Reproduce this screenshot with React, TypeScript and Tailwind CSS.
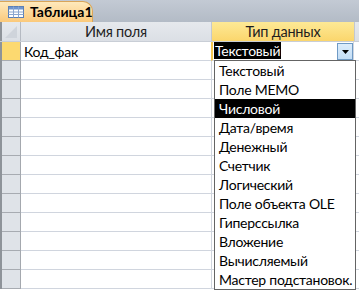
import React from "react";

const items = [
  "Текстовый",
  "Поле MEMO",
  "Числовой",
  "Дата/время",
  "Денежный",
  "Счетчик",
  "Логический",
  "Поле объекта OLE",
  "Гиперссылка",
  "Вложение",
  "Вычисляемый",
  "Мастер подстановок.",
];

function TableIcon() {
  return (
    <svg width="16" height="12" viewBox="0 0 16 12" className="shrink-0">
      <rect x="0.5" y="0.5" width="15" height="11" fill="#ffffff" stroke="#5b7fb5" />
      <rect x="1" y="1" width="14" height="2.5" fill="#6f95cf" />
      <line x1="0.5" y1="6" x2="15.5" y2="6" stroke="#8aa6d0" />
      <line x1="0.5" y1="8.5" x2="15.5" y2="8.5" stroke="#8aa6d0" />
      <line x1="5.5" y1="0.5" x2="5.5" y2="11.5" stroke="#8aa6d0" />
      <line x1="10.5" y1="0.5" x2="10.5" y2="11.5" stroke="#8aa6d0" />
    </svg>
  );
}

export default function App() {
  const rows = Array.from({ length: 13 });
  return (
    <div
      className="relative w-[359px] h-[295px] overflow-hidden bg-white text-black tracking-[-0.25px]"
      style={{ fontFamily: "Lato, 'Liberation Sans', sans-serif" }}
    >
      {/* Tab bar */}
      <div className="h-[22px] bg-gradient-to-b from-[#c3cad4] to-[#b3bbc6] flex items-end">
        <div className="h-[21px] w-[93px] rounded-tr-[10px] bg-gradient-to-b from-[#fee9bc] to-[#fbc97a] border-t border-r border-[#d9a55a] flex items-center pl-[8px] gap-[6px]">
          <TableIcon />
          <span className="text-[14px] font-bold leading-none tracking-normal">Таблица1</span>
        </div>
      </div>

      {/* Header */}
      <div className="flex h-[20px] border-b border-[#c9ced6] bg-gradient-to-b from-[#e6e9ed] to-[#dbdfe5]">
        <div className="w-[2px] bg-[#8e9399]" />
        <div className="relative w-[19px] border-r border-[#b5bac2]">
          <svg width="14" height="14" viewBox="0 0 14 14" className="absolute right-[2px] bottom-[2px]">
            <polygon points="13,1 13,13 1,13" fill="#cfd4db" />
          </svg>
        </div>
        <div className="w-[191px] border-r border-[#c3c8d0] flex items-center justify-center text-[14.5px] text-[#1e1e1e]">
          Имя поля
        </div>
        <div className="w-[143px] border-r border-[#c3c8d0] bg-gradient-to-b from-[#fde995] to-[#fbd66c] flex items-center justify-center text-[14.5px] text-[#1e1e1e]">
          Тип данных
        </div>
        <div className="flex-1" />
      </div>

      {/* Rows */}
      {rows.map((_, i) => (
        <div key={i} className="flex h-[19px]">
          <div className="w-[2px] bg-[#8e9399]" />
          <div
            className={`w-[19px] border-r border-b border-r-[#a4a8ae] border-b-[#a7abb1] ${
              i === 0 ? "bg-[#fcd970]" : "bg-[#dfe3e8]"
            }`}
          />
          <div className="w-[191px] border-r border-b border-[#d0d5de] flex items-center pl-[3px] text-[14px]">
            {i === 0 ? "Код_фак" : ""}
          </div>
          <div
            className={`w-[143px] border-r border-b border-[#d0d5de] ${
              i === 0 ? "border-l-2 border-l-[#f5c850] -ml-[1px]" : ""
            } relative`}
          >
            {i === 0 && (
              <>
                <span className="absolute left-[1px] top-[0px] h-[17px] bg-black text-white text-[14px] leading-[17px] px-[1px]">
                  Текстовый
                </span>
                <div className="absolute right-[0px] top-[1px] w-[16px] h-[17px] border border-[#6f9ac5] bg-gradient-to-b from-[#dcedfc] to-[#c4def5] flex items-center justify-center">
                  <svg width="7" height="4" viewBox="0 0 7 4">
                    <polygon points="0,0 7,0 3.5,4" fill="#000" />
                  </svg>
                </div>
              </>
            )}
          </div>
          <div className="flex-1 border-b border-[#d0d5de]" />
        </div>
      ))}

      {/* Dropdown list */}
      <div className="absolute left-[214px] top-[60px] w-[142px] h-[230px] bg-white border border-[#646464] flex flex-col">
        {items.map((t, i) => (
          <div
            key={t}
            className={`h-[19px] flex items-center pl-[4px] text-[14px] whitespace-nowrap ${
              i === 2 ? "bg-black text-white" : "text-black"
            }`}
          >
            {t}
          </div>
        ))}
      </div>
    </div>
  );
}
